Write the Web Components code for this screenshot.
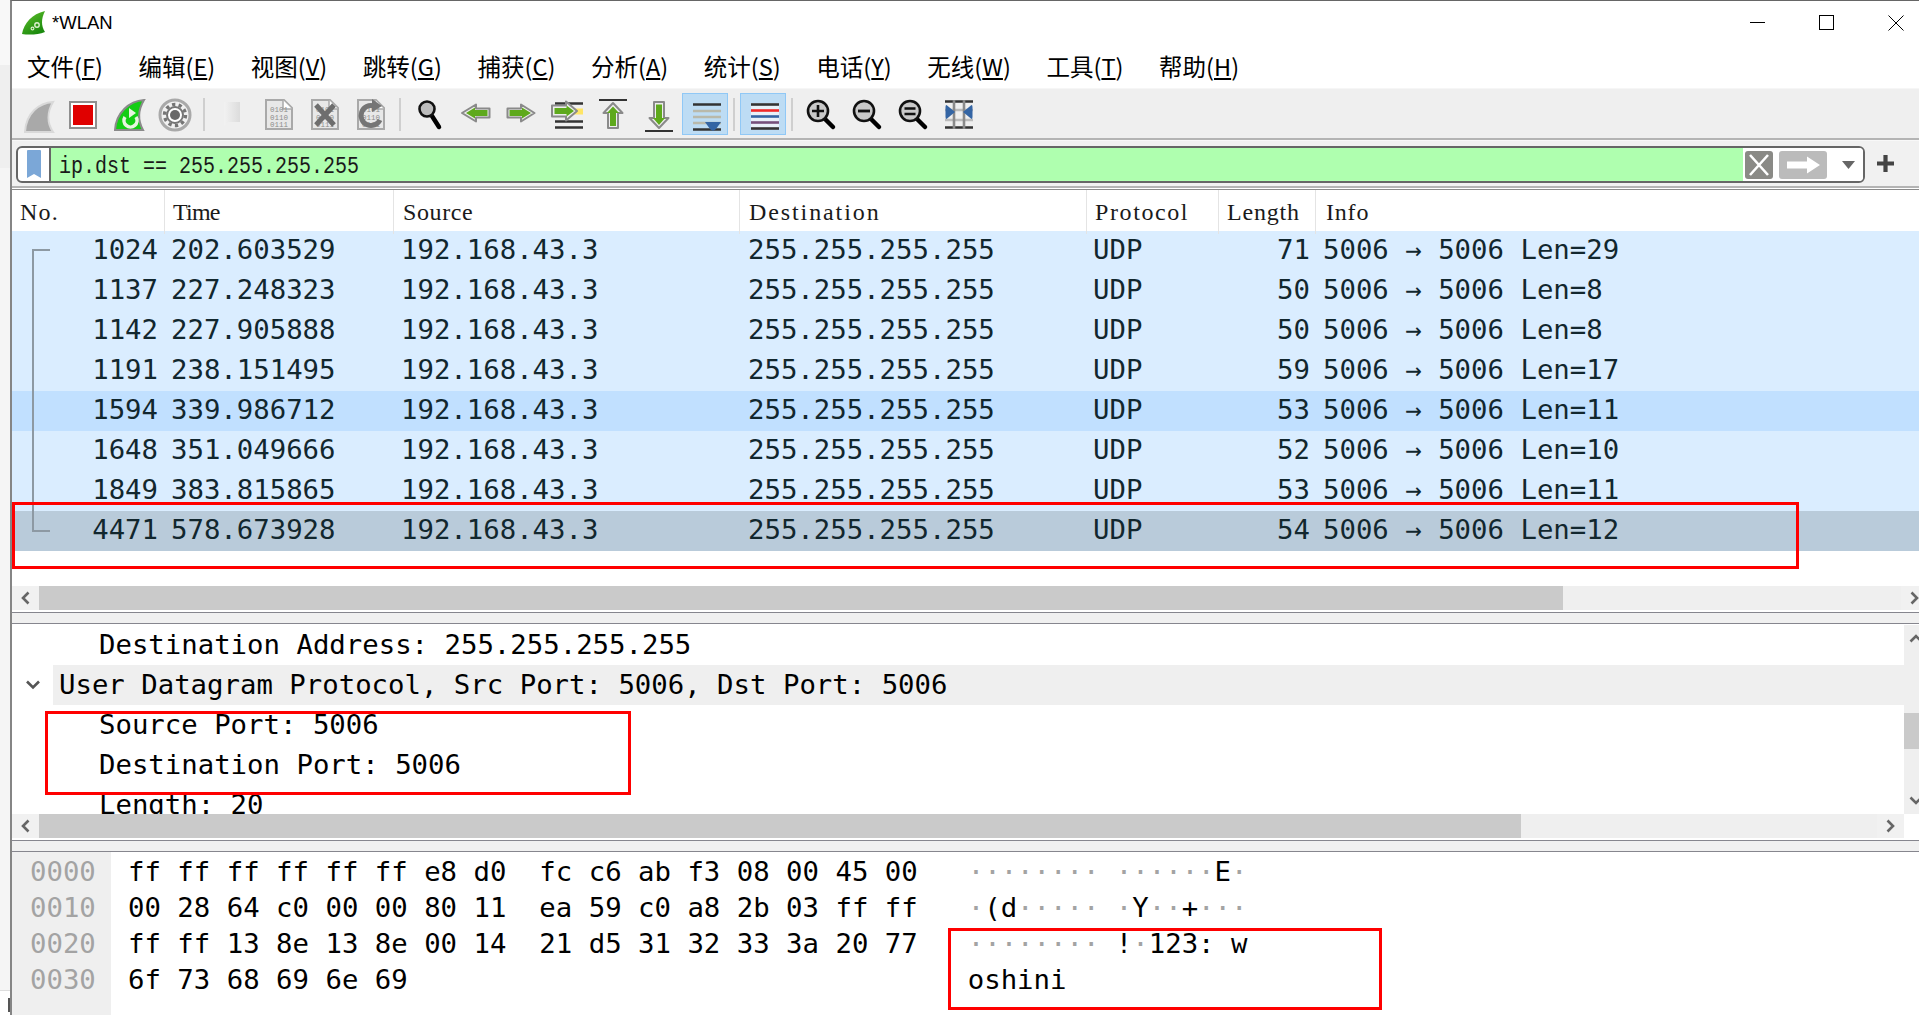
<!DOCTYPE html>
<html>
<head>
<meta charset="utf-8">
<title>*WLAN</title>
<style>
html, body { margin: 0; padding: 0; width: 1919px; height: 1015px; overflow: hidden; background: #fff; }
</style>
</head>
<body>
<wl-window>
    <wl-titlebar>*WLAN</wl-titlebar>
    <wl-menubar>
        <wl-menu>文件(<u>F</u>)</wl-menu>
        <wl-menu>编辑(<u>E</u>)</wl-menu>
        <wl-menu>视图(<u>V</u>)</wl-menu>
        <wl-menu>跳转(<u>G</u>)</wl-menu>
        <wl-menu>捕获(<u>C</u>)</wl-menu>
        <wl-menu>分析(<u>A</u>)</wl-menu>
        <wl-menu>统计(<u>S</u>)</wl-menu>
        <wl-menu>电话(<u>Y</u>)</wl-menu>
        <wl-menu>无线(<u>W</u>)</wl-menu>
        <wl-menu>工具(<u>T</u>)</wl-menu>
        <wl-menu>帮助(<u>H</u>)</wl-menu>
    </wl-menubar>
    <wl-toolbar>
        <wl-tool icon="fin"></wl-tool>
        <wl-tool icon="stop"></wl-tool>
        <wl-tool icon="restart"></wl-tool>
        <wl-tool icon="gear"></wl-tool>
        <wl-sep></wl-sep>
        <wl-tool icon="open"></wl-tool>
        <wl-tool icon="file"></wl-tool>
        <wl-tool icon="close"></wl-tool>
        <wl-tool icon="reload"></wl-tool>
        <wl-sep></wl-sep>
        <wl-tool icon="find"></wl-tool>
        <wl-tool icon="back"></wl-tool>
        <wl-tool icon="forward"></wl-tool>
        <wl-tool icon="goto"></wl-tool>
        <wl-tool icon="first"></wl-tool>
        <wl-tool icon="last"></wl-tool>
        <wl-tool icon="autoscroll" active></wl-tool>
        <wl-sep></wl-sep>
        <wl-tool icon="colorize" active></wl-tool>
        <wl-sep></wl-sep>
        <wl-tool icon="zoomin"></wl-tool>
        <wl-tool icon="zoomout"></wl-tool>
        <wl-tool icon="zoomreset"></wl-tool>
        <wl-tool icon="columns"></wl-tool>
    </wl-toolbar>
    <wl-filter>ip.dst == 255.255.255.255</wl-filter>
    <wl-packets></wl-packets>
    <wl-splitter></wl-splitter>
    <wl-details></wl-details>
    <wl-splitter></wl-splitter>
    <wl-bytes></wl-bytes>

    <wl-mark slot="marks" x="12" y="502" w="1787" h="67"></wl-mark>
    <wl-mark slot="marks" x="45" y="711" w="586" h="84"></wl-mark>
    <wl-mark slot="marks" x="948" y="928" w="434" h="82"></wl-mark>
</wl-window>

<script>
const MONO = `"DejaVu Sans Mono", "Liberation Mono", monospace`;

function define(name, html, setup) {
    const template = document.createElement('template');
    template.innerHTML = html;
    customElements.define(name, class extends HTMLElement {
        constructor() {
            super();
            const root = this.attachShadow({ mode: 'open' });
            root.appendChild(template.content.cloneNode(true));
        }
        connectedCallback() {
            if (setup) setup(this, this.shadowRoot);
        }
    });
}

define('wl-window', `
    <style>
    :host { display: flex; position: relative; width: 1919px; height: 1015px; overflow: hidden; }
    .desk {
        flex: 0 0 10px;
        background:
            linear-gradient(#555, #555) 8px 998px / 2px 14px no-repeat,
            linear-gradient(#f8f8f8 0 65px, #efefef 65px 168px, #f5f5f5 168px 990px, #ddd 990px 991px, #fff 991px);
    }
    .main {
        flex: 1;
        min-width: 0;
        display: flex;
        flex-direction: column;
        border-left: 2px solid #858585;
        border-top: 1px solid #666;
        background: #fff;
    }
    ::slotted(*) { flex: none; }
    ::slotted(wl-bytes) { flex: 1; }
    </style>
    <div class="desk"></div>
    <div class="main"><slot></slot></div>
    <slot name="marks"></slot>
`);

define('wl-titlebar', `
    <style>
    :host {
        display: flex;
        align-items: center;
        height: 43px;
        padding-left: 10px;
        font: 18.5px "Liberation Sans", Arial, sans-serif;
        color: #000;
    }
    svg { flex: none; }
    .text { margin-left: 6px; flex: 1; }
    .ctl { display: flex; margin-right: 15px; gap: 54px; }
    .ctl svg { display: block; }
    </style>
    <svg width="24" height="24" viewBox="0 0 24 24">
        <defs><linearGradient id="g" x1="0" y1="0" x2="0.6" y2="1">
            <stop offset="0" stop-color="#63c22c"/><stop offset="1" stop-color="#1b8a0e"/>
        </linearGradient></defs>
        <path d="M0 23 C2 12 10 3 23 0 C19 8 19 15 23 21 C16 24 6 24 0 23 Z" fill="url(#g)"/>
        <circle cx="15" cy="14" r="2.2" fill="none" stroke="#dff0d2" stroke-width="1.4"/>
        <circle cx="10.5" cy="17.5" r="1.4" fill="none" stroke="#dff0d2" stroke-width="1.1"/>
    </svg>
    <span class="text"><slot></slot></span>
    <div class="ctl">
        <svg width="15" height="15" viewBox="0 0 15 15"><path d="M0 7.5H15" stroke="#000" stroke-width="1"/></svg>
        <svg width="15" height="15" viewBox="0 0 15 15"><rect x="0.5" y="0.5" width="14" height="14" fill="none" stroke="#000"/></svg>
        <svg width="16" height="16" viewBox="0 0 16 16"><path d="M0.5 0.5L15.5 15.5M15.5 0.5L0.5 15.5" stroke="#000" stroke-width="1"/></svg>
    </div>
`);

define('wl-menubar', `
    <style>
    :host {
        display: flex;
        align-items: center;
        gap: 35.6px;
        height: 44px;
        padding-left: 15px;
        border-bottom: 1px solid #f6f6f6;
        font: 23.5px "Noto Sans CJK SC", "Liberation Sans", sans-serif;
        color: #000;
    }
    </style>
    <slot></slot>
`);

define('wl-menu', `
    <style>:host { display: block; white-space: nowrap; line-height: 44px; }</style>
    <slot></slot>
`);

define('wl-toolbar', `
    <style>
    :host {
        display: flex;
        height: 49px;
        padding-left: 2px;
        background: #efefef;
        border-bottom: 2px solid #b4b4b4;
    }
    </style>
    <slot></slot>
`);

define('wl-sep', `
    <style>
    :host { display: block; flex: 0 0 12px; position: relative; }
    div { width: 2px; height: 33px; margin: 9px auto 0; background: #cfcfcf; }
    </style>
    <div></div>
`);

const docBody = `
    <path d="M10 7H28L36 15V36H10Z" fill="#e8e8e8" stroke="#a9a9a9" stroke-width="2"/>
    <path d="M27 7V16H36" fill="#fff" stroke="#a9a9a9" stroke-width="1.5"/>
    <g font-family="Liberation Mono, monospace" font-size="7.5" fill="#8c8c8c">
        <text x="14" y="19">0101</text><text x="14" y="26.5">0110</text><text x="14" y="34">0111</text>
    </g>`;

const lens = (inner) => `
    <path d="M27 26L35 34" stroke="#000" stroke-width="4.5" stroke-linecap="round"/>
    <circle cx="20" cy="18" r="10" fill="#c9c9c9" stroke="#111" stroke-width="2.6"/>
    ${inner}`;

const arrowH = (d1, d2) => `<path d="${d1}" fill="#eee" stroke="#8a8a8a" stroke-width="2" stroke-linejoin="round"/><path d="${d2}" fill="#5ea91c"/>`;

const ICONS = {
    fin: `<path d="M11 39C12 20 25 10 39 9C33 19 33 30 39 39Z" fill="#a9a9a9" stroke="#d9d9d9" stroke-width="2"/>`,
    stop: `<rect x="10" y="9" width="26" height="26" fill="#fff" stroke="#8f8f8f" stroke-width="2"/><rect x="13" y="12" width="20" height="20" fill="#e00000"/>`,
    restart: `<path d="M9 37C10 20 23 8 38 7C32 17 32 28 37 37Z" fill="#14cd14" stroke="#8a8a8a" stroke-width="2"/>
        <path d="M19 24A6.5 6.5 0 1 0 30 24" fill="none" stroke="#e8f5e0" stroke-width="3.5"/>
        <path d="M23 15L30 20L23 25Z" fill="#e8f5e0"/>`,
    gear: `<circle cx="23" cy="22" r="15" fill="#f1f1f1" stroke="#a9a9a9" stroke-width="3"/>
        <circle cx="23" cy="22" r="10.5" fill="none" stroke="#757575" stroke-width="3.4" stroke-dasharray="3.3 3.3"/>
        <circle cx="23" cy="22" r="8" fill="#fff" stroke="#757575" stroke-width="2"/>
        <circle cx="23" cy="22" r="5" fill="#6a6a6a"/>`,
    open: `<defs><linearGradient id="o"><stop offset="0" stop-color="#f2f2f2"/><stop offset="1" stop-color="#dcdcdc"/></linearGradient></defs>
        <path d="M14 9H30V29H18L14 33Z" fill="url(#o)"/>`,
    file: docBody,
    close: docBody + `<path d="M14 12L32 32M32 12L14 32" stroke="#6e6e6e" stroke-width="5"/>`,
    reload: docBody + `<path d="M32 27A10 10 0 1 1 26 13" fill="none" stroke="#757575" stroke-width="5"/><path d="M24 6L34 13L24 19Z" fill="#757575"/>`,
    find: `<path d="M26 23L33 34" stroke="#000" stroke-width="4.5" stroke-linecap="round"/>
        <circle cx="21" cy="16" r="7.5" fill="#bdbdbd" stroke="#111" stroke-width="2.6"/>`,
    back: arrowH('M10 20L24 11.5V15.5H37.5V24.5H24V28.5Z', 'M14 20L23 14.5V17H35.5V23H23V25.5Z'),
    forward: arrowH('M36.5 20L23 11.5V15.5H9.5V24.5H23V28.5Z', 'M33 20L24 14.5V17H11.5V23H24V25.5Z'),
    goto: `<path d="M11 10.5H39M11 28.5H39M11 34.5H39" stroke="#333" stroke-width="2.4"/>
        <rect x="28" y="15.5" width="11" height="6" fill="#ffe566"/>` +
        arrowH('M33 18L22 8.5V12.5H8V23.5H22V27.5Z', 'M30 18L22.5 12.5V15H10.5V21H22.5V23.5Z'),
    first: `<path d="M9 7H37" stroke="#333" stroke-width="2"/>` +
        arrowH('M23 10L32.5 20H28V35H18V20H13.5Z', 'M23 13.5L29 20H26V33H20V20H17Z'),
    last: `<path d="M9 38H37" stroke="#333" stroke-width="2"/>` +
        arrowH('M23 35L32.5 25H28V9H18V25H13.5Z', 'M23 32L29 25H26V11.5H20V25H17Z'),
    autoscroll: `<path d="M11 11.5H39M11 36.5H39" stroke="#333" stroke-width="2.6"/>
        <path d="M11 18H39M11 24H39M11 30H39" stroke="#b9b9ab" stroke-width="2.6"/>
        <path d="M23 29H39L34 36Q31 39.5 28 36Z" fill="#3465a4"/>`,
    colorize: `<rect x="11" y="10" width="28" height="26" fill="#e8f1f8"/>
        <path d="M11 11.5H39" stroke="#333" stroke-width="2.6"/>
        <path d="M11 17.5H39" stroke="#ef2929" stroke-width="2.6"/>
        <path d="M11 23.5H39" stroke="#3465a4" stroke-width="2.6"/>
        <path d="M11 29.5H39" stroke="#75507b" stroke-width="2.6"/>
        <path d="M11 35.5H39" stroke="#333" stroke-width="2.6"/>`,
    zoomin: lens(`<path d="M14 18H26M20 12V24" stroke="#111" stroke-width="2.6"/>`),
    zoomout: lens(`<path d="M14 18H26" stroke="#111" stroke-width="2.8"/>`),
    zoomreset: lens(`<path d="M14.5 15.5H25.5M14.5 21H25.5" stroke="#111" stroke-width="2.6"/>`),
    columns: `<path d="M9 8.5H37M9 34.5H37" stroke="#333" stroke-width="2.6"/>
        <path d="M9 17H37M9 27H37" stroke="#bbb" stroke-width="2.4"/>
        <path d="M18 7V36M28 7V36" stroke="#8a8a8a" stroke-width="2.6"/>
        <path d="M10.5 12Q9.5 12 9.5 14V24Q9.5 26 10.5 26L19 19Z" fill="#3465a4"/>
        <path d="M35.5 12Q36.5 12 36.5 14V24Q36.5 26 35.5 26L27 19Z" fill="#3465a4"/>`,
};

define('wl-tool', `
    <style>
    :host { display: block; flex: 0 0 46px; height: 42px; margin-top: 4px; box-sizing: border-box; }
    :host([active]) { background: #bddcf4; outline: 1px solid #90c8f6; outline-offset: -1px; }
    svg { display: block; }
    </style>
    <svg width="46" height="42" viewBox="0 0 46 42"></svg>
`, (el, root) => {
    root.querySelector('svg').innerHTML = ICONS[el.getAttribute('icon')] || '';
});

define('wl-filter', `
    <style>
    :host {
        display: flex;
        align-items: center;
        height: 48px;
        padding-left: 4px;
        background: #f1f1f1;
        border-top: 1px solid #f8f8f8;
        border-bottom: 2px solid #b4b4b4;
        box-sizing: border-box;
    }
    .box {
        display: flex;
        align-items: stretch;
        flex: none;
        width: 1849px;
        height: 37px;
        box-sizing: border-box;
        margin-top: 2px;
        border: 2px solid #666;
        border-radius: 6px;
        background: #fff;
        overflow: hidden;
    }
    .mark { flex: 0 0 33px; border-right: 2px solid #666; display: flex; justify-content: center; align-items: center; box-sizing: border-box; }
    .field {
        flex: 1;
        background: #afffaf;
        display: flex;
        align-items: center;
        padding: 4px 0 0 8px;
        overflow: hidden;
    }
    .text {
        display: block;
        white-space: pre;
        font: 24px "Liberation Mono", monospace;
        color: #1a1a1a;
        transform: scaleX(0.833);
        transform-origin: left center;
    }
    .btns { flex: none; display: flex; align-items: center; padding-left: 2px; background: #fff; }
    .btns svg { display: block; }
    .x { margin-right: 6px; }
    .go { margin-right: 15px; }
    .down { margin-right: 8px; }
    .plus { margin-left: 12px; flex: none; }
    </style>
    <div class="box">
        <div class="mark">
            <svg width="16" height="29" viewBox="0 0 16 29"><path d="M1 1Q1 0 2 0H14Q15 0 15 1V28L8 24L1 28Z" fill="#7ba7d7"/></svg>
        </div>
        <div class="field"><span class="text"><slot></slot></span></div>
        <div class="btns">
            <svg class="x" width="28" height="28" viewBox="0 0 28 28"><rect width="28" height="28" rx="3" fill="#8a8a86"/><path d="M5 4L23 24M23 4L5 24" stroke="#fff" stroke-width="2.6"/></svg>
            <svg class="go" width="48" height="28" viewBox="0 0 48 28"><rect width="48" height="28" rx="3" fill="#bbb"/><path d="M8 10.5H28V5.5L41 14L28 22.5V17.5H8Z" fill="#fff"/></svg>
            <svg class="down" width="13" height="8" viewBox="0 0 13 8"><path d="M0 0H13L6.5 8Z" fill="#666"/></svg>
        </div>
    </div>
    <svg class="plus" width="17" height="17" viewBox="0 0 17 17"><path d="M8.5 0V17M0 8.5H17" stroke="#444" stroke-width="4.2"/></svg>
`);

define('wl-scroll', `
    <style>
    :host { display: flex; height: 24px; background: #efefef; }
    .arrow { flex: 0 0 27px; display: flex; align-items: center; justify-content: center; background: #f1f1f1; }
    .track { flex: 1; min-width: 0; }
    .thumb { height: 100%; background: #cacaca; }
    svg { display: block; }
    </style>
    <div class="arrow"><svg width="9" height="14" viewBox="0 0 9 14"><path d="M7.5 1.5L2 7L7.5 12.5" fill="none" stroke="#666" stroke-width="2.6"/></svg></div>
    <div class="track"><div class="thumb"></div></div>
    <div class="arrow"><svg width="9" height="14" viewBox="0 0 9 14"><path d="M1.5 1.5L7 7L1.5 12.5" fill="none" stroke="#666" stroke-width="2.6"/></svg></div>
`, (el, root) => {
    root.querySelector('.thumb').style.width = el.getAttribute('thumb') + 'px';
});

const COLS = [
    { title: 'No.', ls: 1.2, head: 8 },
    { title: 'Time', ls: -0.8, head: 8 },
    { title: 'Source', ls: 0.6, head: 9 },
    { title: 'Destination', ls: 1.9, head: 9 },
    { title: 'Protocol', ls: 1.6, head: 8 },
    { title: 'Length', ls: 0.8, head: 8 },
    { title: 'Info', ls: 0.8, head: 10 },
];

const PACKETS = [
    ['1024', '202.603529', '71', 'Len=29', ''],
    ['1137', '227.248323', '50', 'Len=8', ''],
    ['1142', '227.905888', '50', 'Len=8', ''],
    ['1191', '238.151495', '59', 'Len=17', ''],
    ['1594', '339.986712', '53', 'Len=11', 'hot'],
    ['1648', '351.049666', '52', 'Len=10', ''],
    ['1849', '383.815865', '53', 'Len=11', ''],
    ['4471', '578.673928', '54', 'Len=12', 'sel'],
];

define('wl-packets', `
    <style>
    :host { display: block; position: relative; overflow: hidden; height: 424px; width: 1916px; }
    .head, .row { display: grid; grid-template-columns: 153px 229px 346px 347px 132px 97px 1fr; }
    .head { height: 41px; background: #fff; margin-top: 1px; border-top: 1px solid #8a8a8a; }
    .head div {
        font: 24px "Liberation Serif", serif;
        line-height: 44px;
        color: #1a1a1a;
        border-right: 1px solid #e4e4e4;
        white-space: nowrap;
    }
    .head div:last-child { border-right: 0; }
    .row {
        height: 40px;
        background: #daedff;
        color: #12272e;
        font: 27.33px/38px ${MONO};
        white-space: pre;
    }
    .row.hot { background: #c1e0ff; }
    .row.sel { background: #b9cbda; }
    .row div { padding-left: 7px; overflow: hidden; }
    .row .no { padding: 0 7px 0 0; text-align: right; }
    .row .time { padding-left: 6px; }
    .row .dest { padding-left: 8px; }
    .row .proto { padding-left: 6px; }
    .row .len { padding: 0 6px 0 0; text-align: right; }
    .row .info { padding-left: 7px; }
    .gap { height: 35px; }
    .tree { position: absolute; left: 20px; top: 61px; }
    .under { height: 2px; }
    </style>
    <div class="head"></div>
    <div class="rows"></div>
    <svg class="tree" width="20" height="283" viewBox="0 0 20 283">
        <path d="M18 1H1V282H18" fill="none" stroke="#8d99a3" stroke-width="2"/>
    </svg>
    <div class="gap"></div>
    <wl-scroll thumb="1524"></wl-scroll>
    <div class="under"></div>
`, (el, root) => {
    root.querySelector('.head').innerHTML = COLS.map(c =>
        `<div style="padding-left:${c.head}px;letter-spacing:${c.ls}px">${c.title}</div>`).join('');
    root.querySelector('.rows').innerHTML = PACKETS.map(p => `
        <div class="row ${p[4]}">
            <div class="no">${p[0]}</div>
            <div class="time">${p[1]}</div>
            <div>192.168.43.3</div>
            <div class="dest">255.255.255.255</div>
            <div class="proto">UDP</div>
            <div class="len">${p[2]}</div>
            <div class="info">5006 → 5006 ${p[3]}</div>
        </div>`).join('');
});

define('wl-splitter', `
    <style>
    :host {
        display: block;
        height: 10px;
        background: #f0f0f0;
        border-top: 1px solid #86868e;
        border-bottom: 1px solid #86868e;
    }
    </style>
`);

define('wl-details', `
    <style>
    :host { display: block; font: 27.33px/40px ${MONO}; color: #000; width: 1907px; }
    .body { display: flex; height: 190px; }
    .tree { flex: 1; min-width: 0; height: 190px; overflow: hidden; padding-top: 1px; box-sizing: border-box; }
    .line { height: 40px; padding-left: 87px; white-space: pre; }
    .open { display: flex; height: 40px; padding-left: 13px; }
    .chev { flex: 0 0 28px; display: flex; align-items: center; }
    .open .text { flex: 1; background: #efefef; padding-left: 6px; white-space: pre; }
    .vbar { flex: 0 0 24px; margin-right: -9px; background: #efefef; position: relative; display: flex; flex-direction: column; justify-content: space-between; align-items: center; margin-top: 1px; }
    .vbar svg { margin: 9px 0; display: block; }
    .vthumb { position: absolute; left: 0; right: 0; top: 88px; height: 36px; background: #cacaca; }
    .under { height: 2px; }
    svg { display: block; }
    </style>
    <div class="body">
        <div class="tree">
            <div class="line">Destination Address: 255.255.255.255</div>
            <div class="open">
                <span class="chev"><svg width="16" height="10" viewBox="0 0 16 10"><path d="M2 1.5L8 7.5L14 1.5" fill="none" stroke="#555" stroke-width="2.6"/></svg></span>
                <span class="text">User Datagram Protocol, Src Port: 5006, Dst Port: 5006</span>
            </div>
            <div class="line">Source Port: 5006</div>
            <div class="line">Destination Port: 5006</div>
            <div class="line">Length: 20</div>
        </div>
        <div class="vbar">
            <svg width="14" height="9" viewBox="0 0 14 9"><path d="M1.5 7.5L7 2L12.5 7.5" fill="none" stroke="#666" stroke-width="2.6"/></svg>
            <div class="vthumb"></div>
            <svg width="14" height="9" viewBox="0 0 14 9"><path d="M1.5 1.5L7 7L12.5 1.5" fill="none" stroke="#666" stroke-width="2.6"/></svg>
        </div>
    </div>
    <wl-scroll thumb="1482" style="margin-right:15px"></wl-scroll>
    <div class="under"></div>
`);

const dots = (s) => s.replace(/·+/g, m => `<span class="np">${m}</span>`);

const BYTES = [
    ['0000', 'ff ff ff ff ff ff e8 d0  fc c6 ab f3 08 00 45 00', '········ ······E·'],
    ['0010', '00 28 64 c0 00 00 80 11  ea 59 c0 a8 2b 03 ff ff', '·(d····· ·Y··+···'],
    ['0020', 'ff ff 13 8e 13 8e 00 14  21 d5 31 32 33 3a 20 77', '········ !·123: w'],
    ['0030', '6f 73 68 69 6e 69', 'oshini'],
];

define('wl-bytes', `
    <style>
    :host { display: flex; min-height: 0; font: 27.33px/36px ${MONO}; color: #000; }
    .off, .hex, .asc { white-space: pre; }
    .off { flex: 0 0 99px; background: #efefef; color: #a3a3a3; padding: 2px 0 0 18px; box-sizing: border-box; }
    .hex { flex: 0 0 789.6px; padding: 2px 0 0 17px; box-sizing: content-box; }
    .asc { margin-left: 50px; padding-top: 2px; }
    .np { color: #a3a3a3; }
    </style>
    <div class="off"></div>
    <div class="hex"></div>
    <div class="asc"></div>
`, (el, root) => {
    root.querySelector('.off').innerHTML = BYTES.map(b => `<div>${b[0]}</div>`).join('');
    root.querySelector('.hex').innerHTML = BYTES.map(b => `<div>${b[1]}</div>`).join('');
    root.querySelector('.asc').innerHTML = BYTES.map(b => `<div>${dots(b[2])}</div>`).join('');
});

// the red boxes somebody drew on top of the capture
define('wl-mark', `
    <style>
    :host { display: block; position: absolute; box-sizing: border-box; border: 3px solid #f00; pointer-events: none; }
    </style>
`, (el) => {
    el.style.left = el.getAttribute('x') + 'px';
    el.style.top = el.getAttribute('y') + 'px';
    el.style.width = el.getAttribute('w') + 'px';
    el.style.height = el.getAttribute('h') + 'px';
});
</script>
</body>
</html>
